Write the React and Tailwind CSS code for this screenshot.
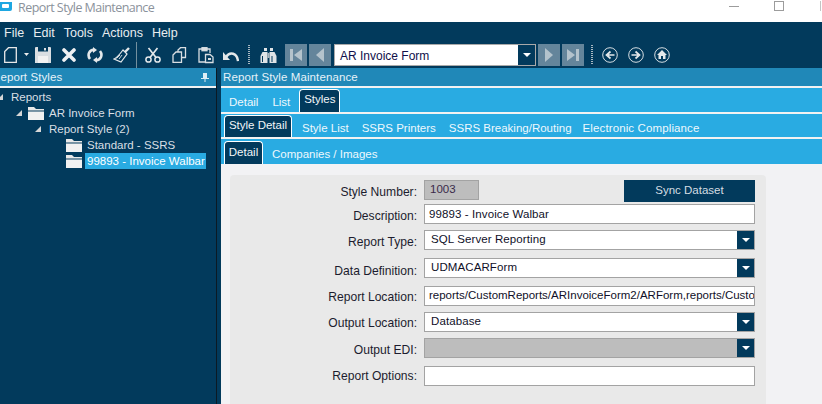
const Caret = () => (
  <svg width="8" height="4" viewBox="0 0 8 4"><path d="M0 0H8L4 4Z" fill="#fff" /></svg>
);

const Combo = ({ value, cls = "bg-white" }) => (
  <div className={`flex-1 h-5 border border-[#a3a3a3] flex items-center ${cls}`}>
    <span className="flex-1 pl-[6px] text-[11.5px] text-[#101028] tracking-[0.1px] leading-none">{value}</span>
    <span className="w-[17px] h-[18px] bg-[#023a5c] flex items-center justify-center"><Caret /></span>
  </div>
);

const Row = ({ label, mt, lmt = "mt-[2px]", children }) => (
  <div className={`flex items-center ${mt}`}>
    <div className={`w-[187px] text-right text-[12.1px] text-[#1c1c2e] leading-none ${lmt}`}>{label}</div>
    <div className="ml-[7px] flex w-[331px]">{children}</div>
  </div>
);

const Folder = () => (
  <svg width="16" height="13" viewBox="0 0 16 13" className="shrink-0">
    <path d="M0 0H6L8 2H16V3.500H0Z" fill="#e8e8e8" />
    <rect x="0" y="4.500" width="16" height="8.500" fill="#f1f1f1" />
  </svg>
);

const Tri = () => (
  <svg width="6" height="6" viewBox="0 0 6 6" className="shrink-0"><path d="M6 0V6H0Z" fill="#d6d6d6" /></svg>
);

const TreeRow = ({ pl, children }) => (
  <div className={`h-4 flex items-center whitespace-nowrap text-[11.5px] text-[#d9dfe4] ${pl}`}>{children}</div>
);

const Tab = ({ children, className = "" }) => (
  <div className={`bg-[#023a5c] text-[#f2f6f8] border border-white border-b-0 rounded-t-[4px] flex items-start justify-center text-[11.5px] ${className}`}>{children}</div>
);

const NavBtn = ({ d }) => (
  <div className="w-[22px] h-[22px] bg-[#64859b] flex items-center justify-center">
    <svg width="14" height="14" viewBox="0 0 14 14"><path d={d} fill="#b4c3cc" /></svg>
  </div>
);

const Dots = ({ cls }) => (
  <div className={`w-[2px] h-[19px] bg-[repeating-linear-gradient(to_bottom,#a9b8c2_0,#a9b8c2_1px,transparent_1px,transparent_2px)] ${cls}`} />
);

const Circle = ({ children, cls }) => (
  <svg width="16" height="16" viewBox="0 0 16 16" className={cls}>
    <circle cx="8" cy="8" r="7.300" fill="none" stroke="#d5dde2" strokeWidth="1" />
    {children}
  </svg>
);

export default function App() {
  return (
    <div className="w-[822px] h-[404px] overflow-hidden flex flex-col bg-white font-['Liberation_Sans',Arial,sans-serif]">
      {/* title bar */}
      <div className="h-[22px] flex items-start bg-white relative">
        <svg width="12" height="9" viewBox="0 0 12 9" className="mt-[2px] shrink-0">
          <path d="M0 0H12V7a2 2 0 0 1-2 2H0Z" fill="#1ea7e1" />
          <rect x="2" y="2" width="7" height="4" rx="1" fill="#fff" />
        </svg>
        <span className="ml-[6px] mt-px text-[12.5px] leading-[14px] text-[#8b929b] font-['Open_Sans',sans-serif] tracking-[-0.55px]">Report Style Maintenance</span>
        <div className="ml-auto flex items-start">
          <div className="w-[10px] h-px bg-[#9c9c9c] mt-[6px] mr-[35px]" />
          <div className="w-[10px] h-[10px] border border-[#9c9c9c] mt-px mr-[36px]" />
          <div className="w-[2px] h-[10px] mt-px border-l border-[#c4c4c4]" />
        </div>
      </div>

      {/* menu */}
      <div className="h-[22px] bg-[#023a5c] flex items-center pl-1 gap-[9px] text-[12.5px] text-[#e8edf0]">
        <span>File</span><span>Edit</span><span>Tools</span><span>Actions</span><span>Help</span>
      </div>

      {/* toolbar */}
      <div className="h-6 bg-[#023a5c] flex items-start pl-1">
        <svg width="13" height="16" viewBox="0 0 13 16" className="mt-[3px]"><path d="M4.500.7H12.300V15.300H.7V4.500Z" fill="none" stroke="#e8e8e8" strokeWidth="1.300" /></svg>
        <svg width="5" height="3" viewBox="0 0 5 3" className="mt-[9px] ml-[7px]"><path d="M0 0H5L2.500 3Z" fill="#eee" /></svg>
        <svg width="16" height="16" viewBox="0 0 16 16" className="mt-[3px] ml-[6px]">
          <path d="M0 1a1 1 0 0 1 1-1H15a1 1 0 0 1 1 1V16H0Z" fill="#d9dee2" />
          <rect x="3" y="0" width="10" height="4.500" fill="#023a5c" /><rect x="9" y="1" width="2" height="2.500" fill="#d9dee2" />
          <rect x="3" y="9" width="10" height="7" fill="#f2f2f2" />
        </svg>
        <svg width="14" height="14" viewBox="0 0 14 14" className="mt-1 ml-[11px]"><path d="M2 2L12 12M12 2L2 12" stroke="#eef0f2" strokeWidth="3.600" strokeLinecap="round" /></svg>
        <svg width="16" height="16" viewBox="0 0 16 16" className="mt-[3px] ml-[11px]" fill="none">
          <path d="M3 12C0 8 2 3 7 2.600" stroke="#e4e8ea" strokeWidth="2.600" /><path d="M6 0L10 3L6 6Z" fill="#e4e8ea" />
          <path d="M13 4C16 8 14 13 9 13.400" stroke="#e4e8ea" strokeWidth="2.600" /><path d="M10 10L6 13L10 16Z" fill="#e4e8ea" />
        </svg>
        <svg width="17" height="17" viewBox="0 0 17 17" className="mt-[3px] ml-[10px]" fill="none">
          <path d="M10 3L14 7L8 15L1 12C4 11 6 8 10 3Z" stroke="#e4e8ea" strokeWidth="1.200" />
          <path d="M12 5L16 1" stroke="#e4e8ea" strokeWidth="2.400" />
          <path d="M6 12L9 8M3.500 11.500L7 8" stroke="#e4e8ea" strokeWidth="0.900" />
        </svg>
        <div className="w-px h-[26px] bg-[#73909f] -mt-[2px] ml-[6px]" />
        <svg width="16" height="16" viewBox="0 0 16 16" className="mt-[3px] ml-[8px]" fill="none" stroke="#e4e8ea">
          <circle cx="3.500" cy="12.500" r="2.600" strokeWidth="1.500" /><circle cx="12.500" cy="12.500" r="2.600" strokeWidth="1.500" />
          <path d="M5 10.500L12.500 1M11 10.500L3.500 1" strokeWidth="1.700" />
        </svg>
        <svg width="15" height="16" viewBox="0 0 15 16" className="mt-[3px] ml-[11px]" fill="none" stroke="#d9dee2" strokeWidth="1.300">
          <path d="M6 5V3L8.500.7H13.500V10.500H10" /><path d="M1 8L4 5H9.500V15.300H1Z" />
        </svg>
        <svg width="16" height="17" viewBox="0 0 16 17" className="mt-[3px] ml-[11px]" fill="none" stroke="#d9dee2" strokeWidth="1.300">
          <path d="M5 2H1V15H7" /><path d="M9 2H12V6" /><rect x="4" y="0.700" width="5" height="3" fill="#d9dee2" />
          <path d="M7.500 7.500H12L15 10V15.500H7.500Z" fill="#023a5c" /><rect x="10" y="11" width="3" height="2" fill="#d9dee2" stroke="none" />
        </svg>
        <svg width="16" height="11" viewBox="0 0 16 11" className="mt-[7px] ml-[9px]" fill="none">
          <path d="M3 6C7 0 14 2 15 10" stroke="#e4e8ea" strokeWidth="2.400" /><path d="M0 1V9H7Z" fill="#e4e8ea" />
        </svg>
        <Dots cls="mt-px ml-[9px]" />
        <svg width="17" height="15" viewBox="0 0 17 15" className="mt-1 ml-[10px]">
          <path d="M4 0H7V3H4ZM10 0H13V3H10ZM2.500 4H7.500V15H0.500V8Z M9.500 4H14.500L16.500 8V15H9.500Z" fill="#dfe4e7" />
          <rect x="7.500" y="5" width="2" height="5" fill="#aab6bd" />
          <path d="M2.500 8V14M12 8V14" stroke="#023a5c" strokeWidth="1" />
        </svg>
        <div className="ml-[8px] flex gap-[2px]">
          <NavBtn d="M1 1H4V13H1ZM13 1V13L5 7Z" />
          <NavBtn d="M11 0V14L3 7Z" />
        </div>
        <div className="ml-[3px] w-[202px] h-[22px] bg-white border border-[#a9a9a9] flex items-center">
          <span className="flex-1 pl-[5px] pt-[1px] text-[12px] text-[#10104a]">AR Invoice Form</span>
          <span className="w-[17px] h-5 bg-[#023a5c] flex items-center justify-center"><Caret /></span>
        </div>
        <div className="ml-[2px] flex gap-[2px]">
          <NavBtn d="M3 0V14L11 7Z" />
          <NavBtn d="M1 1V13L9 7ZM10 1H13V13H10Z" />
        </div>
        <Dots cls="mt-px ml-[7px]" />
        <Circle cls="mt-[3px] ml-[9px]"><path d="M12.500 8H6M8.500 4.500L4.500 8L8.500 11.500" fill="none" stroke="#e4e8ea" strokeWidth="1.700" /></Circle>
        <Circle cls="mt-[3px] ml-[10px]"><path d="M3.500 8H10M7.500 4.500L11.500 8L7.500 11.500" fill="none" stroke="#e4e8ea" strokeWidth="1.700" /></Circle>
        <Circle cls="mt-[3px] ml-[10px]"><path d="M8 3L13 8H11.500V12H9V9H7V12H4.500V8H3Z" fill="#e4e8ea" /></Circle>
      </div>

      {/* body */}
      <div className="flex-1 flex bg-[#023a5c] min-h-0">
        {/* left panel */}
        <div className="w-[216px] flex flex-col overflow-hidden">
          <div className="h-[18px] bg-[#2088b8] flex items-center justify-between text-[11.5px] tracking-[0.1px] text-[#e6f2f8] pr-[7px]">
            <span className="-ml-[8px] pt-[1px]">Report Styles</span>
            <svg width="8" height="9" viewBox="0 0 8 9"><path d="M2 0H6V5H8V6H4.500V9H3.500V6H0V5H2Z" fill="#dfeef5" /></svg>
          </div>
          <div className="h-[2px] bg-[#f2f2f2]" />
          <div className="pt-[1px] flex flex-col">
            <TreeRow pl="-ml-[3px] pl-0"><Tri /><span className="ml-2 pt-[2px]">Reports</span></TreeRow>
            <TreeRow pl="pl-4"><Tri /><span className="ml-[6px]"><Folder /></span><span className="ml-[5px] pt-[2px]">AR Invoice Form</span></TreeRow>
            <TreeRow pl="pl-[35px]"><Tri /><span className="ml-2 pt-[2px]">Report Style (2)</span></TreeRow>
            <TreeRow pl="pl-[66px]"><Folder /><span className="ml-[5px] pt-[2px]">Standard - SSRS</span></TreeRow>
            <TreeRow pl="pl-[66px]"><Folder /><span className="ml-[3px] w-[121px] h-4 bg-[#29abe2] pl-[2px] text-white leading-[17px]">99893 - Invoice Walbar</span></TreeRow>
          </div>
        </div>

        {/* splitter */}
        <div className="w-[5px] flex">
          <div className="w-px bg-[#0c1a24]" />
        </div>

        {/* right panel */}
        <div className="flex-1 flex flex-col min-w-0">
          <div className="h-[18px] bg-[#2088b8] flex items-center pl-[2px] pt-[1px] text-[11.5px] text-[#e6f2f8] tracking-[0.1px]">Report Style Maintenance</div>
          <div className="h-[2px] bg-[#f2f2f2]" />

          <div className="h-6 bg-[#29abe2] flex items-end pl-2 text-[11.5px] text-[#eef8fd]">
            <span className="mb-[1px]">Detail</span>
            <span className="ml-[14px] mb-[1px]">List</span>
            <Tab className="ml-[9px] w-[41px] h-[23px] pt-[1px]">Styles</Tab>
          </div>
          <div className="h-[2px] bg-[#f2f2f2]" />

          <div className="h-[23px] bg-[#29abe2] flex items-end pl-[3px] text-[11.5px] text-[#eef8fd]">
            <Tab className="w-[68px] h-[22px] pt-[1px]">Style Detail</Tab>
            <span className="ml-[10px]">Style List</span>
            <span className="ml-[13px]">SSRS Printers</span>
            <span className="ml-[13px]">SSRS Breaking/Routing</span>
            <span className="ml-[11px] tracking-[0.12px]">Electronic Compliance</span>
          </div>
          <div className="h-[2px] bg-[#f2f2f2]" />

          <div className="h-[25px] bg-[#29abe2] flex items-end pl-[3px] text-[11.5px] text-[#eef8fd]">
            <Tab className="w-[39px] h-[23px] pt-[2px]">Detail</Tab>
            <span className="ml-[9px] mb-[1px]">Companies / Images</span>
          </div>

          {/* content */}
          <div className="flex-1 bg-[#f2f2f4] pl-[9px] pt-[11px] min-h-0">
            <div className="w-[536px] h-[240px] bg-[#e9e9e9] rounded-t-[4px] pt-[5px]">
              <div className="flex items-start">
                <div className="w-[187px] text-right text-[12.1px] text-[#1c1c2e] leading-none pt-[6px]">Style Number:</div>
                <div className="ml-[7px] w-[55px] h-5 bg-[#bdbdbd] border border-[#a3a3a3] pl-[5px] text-[11.5px] text-[#3a2a4a] leading-[17px]">1003</div>
                <button className="ml-[145px] w-[131px] h-[22px] bg-[#023a5c] text-[11.5px] text-[#d5dde2]">Sync Dataset</button>
              </div>
              <Row label="Description:" mt="mt-[2px]" lmt="mt-[4px]">
                <div className="flex-1 h-5 bg-white border border-[#a3a3a3] pl-[4px] text-[11.5px] text-[#101028] tracking-[0.1px] leading-[18px]">99893 - Invoice Walbar</div>
              </Row>
              <Row label="Report Type:" mt="mt-[6px]" lmt="mt-[4px]"><Combo value="SQL Server Reporting" /></Row>
              <Row label="Data Definition:" mt="mt-2" lmt="mt-[6px]"><Combo value="UDMACARForm" /></Row>
              <Row label="Report Location:" mt="mt-2">
                <div className="flex-1 h-5 bg-white border border-[#a3a3a3] pl-[4px] text-[11.5px] text-[#101028] leading-[17px] whitespace-nowrap overflow-hidden">reports/CustomReports/ARInvoiceForm2/ARForm,reports/Custo</div>
              </Row>
              <Row label="Output Location:" mt="mt-[6px]"><Combo value="Database" /></Row>
              <Row label="Output EDI:" mt="mt-[6px]" lmt="mt-[4px]"><Combo value="" cls="bg-[#bdbdbd]" /></Row>
              <Row label="Report Options:" mt="mt-2" lmt="mt-0">
                <div className="flex-1 h-5 bg-white border border-[#a3a3a3]" />
              </Row>
            </div>
          </div>
        </div>
      </div>
    </div>
  );
}
